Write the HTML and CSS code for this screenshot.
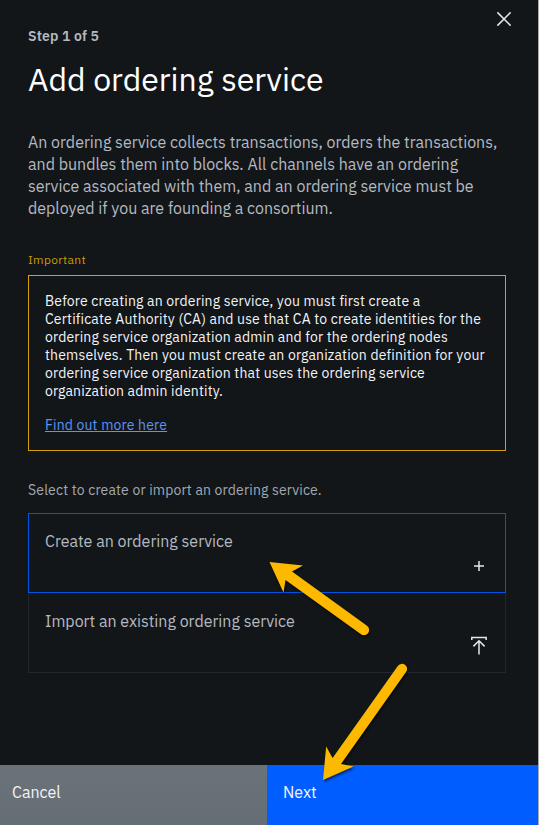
FILE: index.html
```html
<!DOCTYPE html>
<html lang="en">
<head>
<meta charset="utf-8">
<title>Add ordering service</title>
<link rel="stylesheet" href="styles.css">
</head>
<body>
<main class="panel">
  <button class="close" aria-label="Close">
    <svg width="16" height="16" viewBox="0 0 16 16"><path d="M1.4 1.4L14.6 14.6M14.6 1.4L1.4 14.6"/></svg>
  </button>
  <div class="content">
    <p class="step">Step 1 of 5</p>
    <h1 class="title">Add ordering service</h1>
    <p class="intro">
      <span class="line">An ordering service collects transactions, orders the transactions,</span>
      <span class="line">and bundles them into blocks. All channels have an ordering</span>
      <span class="line">service associated with them, and an ordering service must be</span>
      <span class="line">deployed if you are founding a consortium.</span>
    </p>
    <p class="label">Important</p>
    <section class="notice">
      <p class="notice-text">
        <span class="line">Before creating an ordering service, you must first create a</span>
        <span class="line">Certificate Authority (CA) and use that CA to create identities for the</span>
        <span class="line">ordering service organization admin and for the ordering nodes</span>
        <span class="line">themselves. Then you must create an organization definition for your</span>
        <span class="line">ordering service organization that uses the ordering service</span>
        <span class="line">organization admin identity.</span>
      </p>
      <a class="link" href="#">Find out more here</a>
    </section>
    <p class="prompt">Select to create or import an ordering service.</p>
    <div class="tiles">
      <div class="tile selected">
        <span class="tile-name">Create an ordering service</span>
        <svg class="tile-icon" width="16" height="20" viewBox="0 0 16 20"><path d="M8 5V15M3 10H13"/></svg>
      </div>
      <div class="tile">
        <span class="tile-name">Import an existing ordering service</span>
        <svg class="tile-icon" width="16" height="20" viewBox="0 0 16 20"><path d="M.8 4V1.5H15.2V4M8 18.6V5M2.4 10.4L8 4.8L13.6 10.4"/></svg>
      </div>
    </div>
  </div>
  <footer class="actions">
    <button class="action cancel">Cancel</button>
    <button class="action next">Next</button>
  </footer>
</main>
<svg class="arrows" width="539" height="825" viewBox="0 0 539 825">
  <path d="M269.5 562L303 565.5L292 571.5L367 625.8A5 5 0 0 1 361 634.2L285.5 580L283.5 592.5Z"/>
  <path d="M323 780L326.2 746.5L332.6 758L397.8 666A5 5 0 0 1 406.2 671.8L341 764L353.5 766.5Z"/>
</svg>
</body>
</html>
```

FILE: styles.css
```css
* { box-sizing: border-box; }
body {
  margin: 0;
  background: #121619;
  font-family: "IBM Plex Sans", Roboto, sans-serif;
}
p, h1 { margin: 0; font-weight: 400; }
.panel {
  position: relative;
  display: flex;
  flex-direction: column;
  width: 539px;
  height: 825px;
  border-right: 1px solid #a6a8a9;
  background: #121619;
  overflow: hidden;
}
.close {
  position: absolute;
  top: 11px;
  right: 26px;
  width: 16px;
  height: 16px;
  padding: 0;
  border: 0;
  background: none;
}
svg { display: block; fill: none; stroke: #e4e6e8; stroke-width: 1.5; }
.content { flex: 1; padding: 27px 32px 0 28px; }
.step { font-size: 14px; line-height: 18px; font-weight: 600; color: #b5bac0; letter-spacing: .16px; }
.title { margin-top: 14px; font-size: 32px; line-height: 40px; color: #fff; white-space: nowrap; }
.line { display: block; width: max-content; white-space: nowrap; }
.intro { margin-top: 32px; font-size: 16px; line-height: 22px; color: #b5bac0; }
.label { margin-top: 33px; font-size: 12px; line-height: 16px; letter-spacing: .32px; color: #c99c05; }
.notice {
  width: 478px;
  height: 176px;
  margin-top: 7px;
  padding: 16px;
  border: 1px solid #d6a008;
}
.notice-text { font-size: 14px; line-height: 18px; letter-spacing: .16px; color: #f2f4f8; }
.link {
  display: block;
  width: max-content;
  margin-top: 16px;
  font-size: 14px;
  line-height: 18px;
  letter-spacing: .16px;
  color: #5a94f5;
}
.prompt { margin-top: 30px; font-size: 14px; line-height: 18px; letter-spacing: .16px; color: #a2a9b0; }
.tiles { width: 478px; margin-top: 14px; }
.tile {
  display: flex;
  justify-content: space-between;
  height: 80px;
  padding: 17px 18px 16px 16px;
  border: 1px solid #21272a;
  border-top: 0;
}
.tile.selected { border: 1px solid #0353e9; padding-top: 16px; }
.tile-name { font-size: 16px; line-height: 22px; color: #b5bac0; }
.tile-icon { align-self: flex-end; }
.actions { display: flex; height: 60px; }
.action {
  display: flex;
  padding: 16px;
  border: 0;
  font: 16px/22px "IBM Plex Sans", Roboto, sans-serif;
  color: #f2f4f8;
}
.cancel { width: 267px; padding-left: 12px; background: linear-gradient(#6b737a, #666e75); }
.next { flex: 1; background: #005dff; }
.arrows { position: absolute; top: 0; left: 0; pointer-events: none; filter: drop-shadow(1px 2px 1px #0008); }
.arrows path { fill: #fdb900; stroke: none; }
```
